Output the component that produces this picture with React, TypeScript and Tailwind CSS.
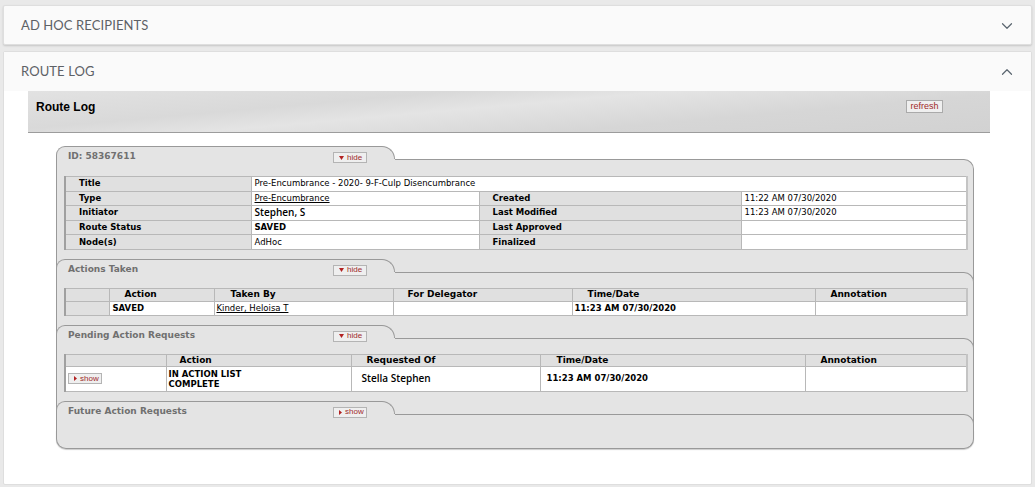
import React from "react";
import clsx from "clsx";
import { ChevronDown, ChevronUp } from "lucide-react";

const SmallButton = ({ label, open }: { label: string; open?: boolean }) => (
    <span className="inline-flex items-center gap-[3px] h-[11px] w-[34px] pl-[5px] border border-[#b4b4b4] bg-[#efefef] text-[8px] leading-none text-[#9e2a2a] font-['Liberation_Sans',Arial,sans-serif]">
        {open ? (
            <svg width="5" height="4" viewBox="0 0 5 4"><path d="M0 0h5L2.5 4z" fill="#b22222" /></svg>
        ) : (
            <svg width="3" height="5" viewBox="0 0 3 5"><path d="M0 0l3 2.5L0 5z" fill="#b22222" /></svg>
        )}
        {label}
    </span>
);

const Section = ({ title, button, first, last, children }: {
    title: string;
    button: React.ReactNode;
    first?: boolean;
    last?: boolean;
    children?: React.ReactNode;
}) => (
    <div className="flex flex-col">
        <div className={clsx("flex h-[29px]", !first && "bg-[#e4e4e4] border-l border-r border-[#999]")}>
            <div className={clsx("w-[324px] flex items-start border-t border-l border-[#999] rounded-tl-[9px] bg-[#e4e4e4] pl-[11px] pt-[3px]", !first && "-ml-px")}>
                <span className="w-[265px] text-[9px] font-bold text-[#707070] leading-[12px]">{title}</span>
                <span className="flex mt-[2px]">{button}</span>
            </div>
            <div className="w-[15px] flex flex-col">
                <div className="h-[13px] border-t border-r border-[#999] rounded-tr-[13px] bg-[#e4e4e4]" />
                <div className="flex-1 bg-[#e4e4e4]" />
            </div>
            <div className={clsx("flex-1 flex flex-col", !first && "-mr-px")}>
                <div className="h-[13px]" />
                <div className="flex-1 border-t border-r border-[#999] rounded-tr-[10px] bg-[#e4e4e4]" />
            </div>
        </div>
        <div className={clsx(
            "border-l border-r border-[#999] bg-[#e4e4e4] pl-[7px] pr-[5px]",
            last ? "h-[19px] border-b rounded-b-[10px] shadow-[0_1px_1px_rgba(0,0,0,0.2)]" : "pb-[9px]"
        )}>
            {children}
        </div>
    </div>
);

const tbl = "w-full table-fixed border-collapse border-l-2 border-l-[#a0a0a0] border-r-2 border-r-[#c4c4c4] leading-[11px]";
const lbl = "bg-[#e0e0e0] border border-[#b8b8b8] pl-[13px] font-bold text-[8.5px] h-[14.6px] p-0";
const val = "bg-white border border-[#b8b8b8] pl-[3px] text-[8.5px] h-[14.6px] p-0";
const th = "bg-[#e0e0e0] border border-[#b8b8b8] font-bold text-[9px] text-left p-0";
const td = "bg-white border border-[#b8b8b8] p-0";

const RouteLogPage = () => {
    return (
        <div className="w-[1035px] h-[487px] overflow-hidden bg-[#e9e9e9] pt-[5px] px-[3px] flex flex-col gap-[6px] font-['Lato',sans-serif]">
            <div className="h-[40px] shrink-0 bg-[#fafafa] border border-[#dedede] rounded-[2px] shadow-[0_1px_2px_rgba(0,0,0,0.15)] flex items-center justify-between pl-[17px] pr-[15px] pt-[2px]">
                <span className="text-[13px] text-[#5d6166] tracking-[0.1px]">AD HOC RECIPIENTS</span>
                <ChevronDown size={18} strokeWidth={1.6} color="#5b6670" />
            </div>
            <div className="h-[434px] shrink-0 bg-white border border-[#dedede] rounded-[2px] flex flex-col">
                <div className="h-[39px] shrink-0 bg-[#fafafa] flex items-center justify-between pl-[17px] pr-[15px]">
                    <span className="text-[13px] text-[#5d6166] tracking-[0.1px]">ROUTE LOG</span>
                    <ChevronUp size={18} strokeWidth={1.6} color="#5b6670" />
                </div>
                <div className="font-['DejaVu_Sans',Verdana,sans-serif] text-black">
                    <div className="ml-[24px] w-[962px] h-[42px] border-b border-[#9c9c9c] bg-[linear-gradient(175deg,#e2e2e2_0%,#d9d9d9_30%,#e4e4e4_45%,#d6d6d6_70%,#d2d2d2_100%)] flex items-start justify-between pl-[8px] pr-[47px] pt-[9px]">
                        <span className="text-[12px] font-bold font-['Liberation_Sans',Arial,sans-serif] leading-[14px]">Route Log</span>
                        <span className="h-[13px] w-[37px] border border-[#aaa] bg-[#efefef] text-[9px] leading-[11px] text-center text-[#9e2a2a] font-['Liberation_Sans',Arial,sans-serif]">refresh</span>
                    </div>

                    <div className="ml-[52px] mt-[13px] w-[918px]">
                        <Section first title="ID: 58367611" button={<SmallButton label="hide" open />}>
                            <table className={clsx(tbl, "mt-[1px]")}>
                                <colgroup>
                                    <col className="w-[186px]" />
                                    <col className="w-[228px]" />
                                    <col className="w-[262px]" />
                                    <col />
                                </colgroup>
                                <tbody>
                                    <tr>
                                        <td className={lbl}>Title</td>
                                        <td className={val} colSpan={3}>Pre-Encumbrance - 2020- 9-F-Culp Disencumbrance</td>
                                    </tr>
                                    <tr>
                                        <td className={lbl}>Type</td>
                                        <td className={val}><span className="underline">Pre-Encumbrance</span></td>
                                        <td className={lbl}>Created</td>
                                        <td className={val}>11:22 AM 07/30/2020</td>
                                    </tr>
                                    <tr>
                                        <td className={lbl}>Initiator</td>
                                        <td className={clsx(val, "font-['Open_Sans',sans-serif] font-semibold text-[10px]")}>Stephen, S</td>
                                        <td className={lbl}>Last Modified</td>
                                        <td className={val}>11:23 AM 07/30/2020</td>
                                    </tr>
                                    <tr>
                                        <td className={lbl}>Route Status</td>
                                        <td className={clsx(val, "font-bold")}>SAVED</td>
                                        <td className={lbl}>Last Approved</td>
                                        <td className={val}></td>
                                    </tr>
                                    <tr>
                                        <td className={lbl}>Node(s)</td>
                                        <td className={val}>AdHoc</td>
                                        <td className={lbl}>Finalized</td>
                                        <td className={val}></td>
                                    </tr>
                                </tbody>
                            </table>
                        </Section>

                        <Section title="Actions Taken" button={<SmallButton label="hide" open />}>
                            <table className={tbl}>
                                <colgroup>
                                    <col className="w-[44px]" />
                                    <col className="w-[105px]" />
                                    <col className="w-[179px]" />
                                    <col className="w-[179px]" />
                                    <col className="w-[243px]" />
                                    <col />
                                </colgroup>
                                <thead>
                                    <tr>
                                        <th className={clsx(th, "h-[13px]")}></th>
                                        <th className={clsx(th, "pl-[15px]")}>Action</th>
                                        <th className={clsx(th, "pl-[16px]")}>Taken By</th>
                                        <th className={clsx(th, "pl-[14px]")}>For Delegator</th>
                                        <th className={clsx(th, "pl-[15px]")}>Time/Date</th>
                                        <th className={clsx(th, "pl-[15px]")}>Annotation</th>
                                    </tr>
                                </thead>
                                <tbody>
                                    <tr>
                                        <td className="bg-[#e0e0e0] border border-[#b8b8b8] h-[14px] p-0"></td>
                                        <td className={clsx(td, "pl-[3px] font-bold text-[8.5px]")}>SAVED</td>
                                        <td className={clsx(td, "pl-[2px] text-[8.5px]")}><span className="underline">Kinder, Heloisa T</span></td>
                                        <td className={td}></td>
                                        <td className={clsx(td, "pl-[2px] font-bold text-[8.5px]")}>11:23 AM 07/30/2020</td>
                                        <td className={td}></td>
                                    </tr>
                                </tbody>
                            </table>
                        </Section>

                        <Section title="Pending Action Requests" button={<SmallButton label="hide" open />}>
                            <table className={tbl}>
                                <colgroup>
                                    <col className="w-[101px]" />
                                    <col className="w-[185px]" />
                                    <col className="w-[189px]" />
                                    <col className="w-[265px]" />
                                    <col />
                                </colgroup>
                                <thead>
                                    <tr>
                                        <th className={clsx(th, "h-[12px]")}></th>
                                        <th className={clsx(th, "pl-[13px]")}>Action</th>
                                        <th className={clsx(th, "pl-[15px]")}>Requested Of</th>
                                        <th className={clsx(th, "pl-[16px]")}>Time/Date</th>
                                        <th className={clsx(th, "pl-[15px]")}>Annotation</th>
                                    </tr>
                                </thead>
                                <tbody>
                                    <tr>
                                        <td className={clsx(td, "h-[25px] pl-[2px] align-middle")}>
                                            <span className="flex"><SmallButton label="show" /></span>
                                        </td>
                                        <td className={clsx(td, "pl-[2px] font-bold text-[8.5px] leading-[10px]")}>IN ACTION LIST<br />COMPLETE</td>
                                        <td className={clsx(td, "pl-[10px] font-['Open_Sans',sans-serif] font-semibold text-[10px]")}>Stella Stephen</td>
                                        <td className={clsx(td, "pl-[6px] font-bold text-[8.5px]")}>11:23 AM 07/30/2020</td>
                                        <td className={td}></td>
                                    </tr>
                                </tbody>
                            </table>
                        </Section>

                        <Section last title="Future Action Requests" button={<SmallButton label="show" />} />
                    </div>
                </div>
            </div>
        </div>
    );
};

export default function App() {
    return <RouteLogPage />;
}
